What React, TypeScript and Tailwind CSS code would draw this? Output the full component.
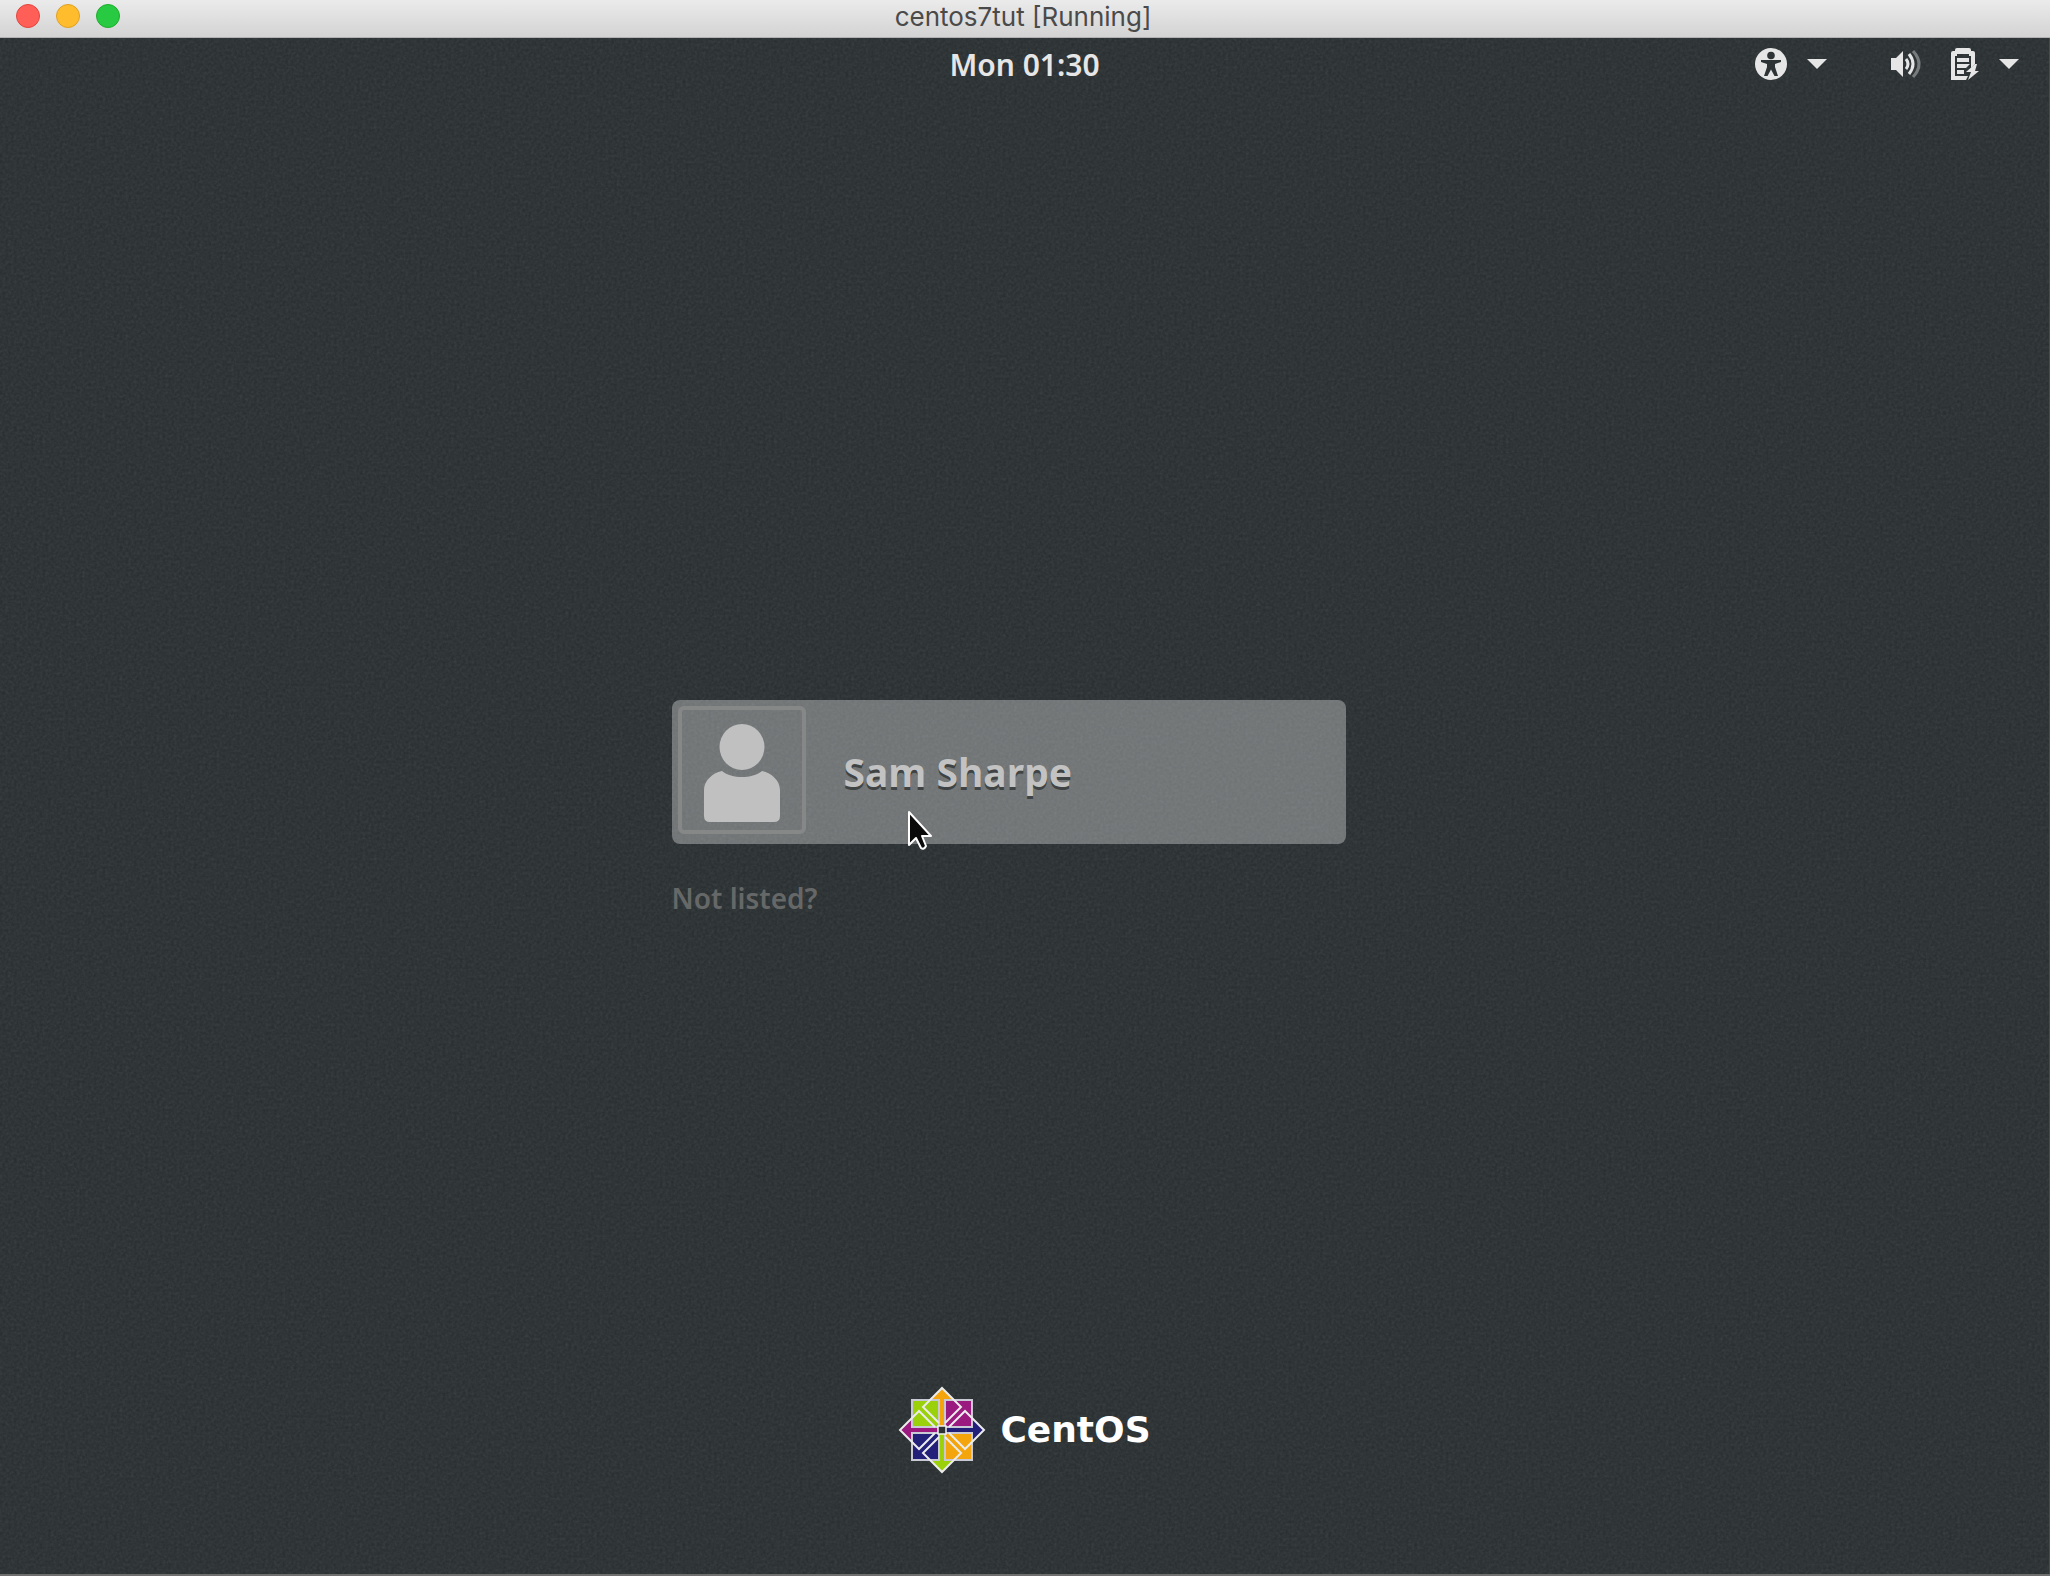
import type { ReactNode } from 'react'

const LIME = '#9bd10a'
const ORANGE = '#f5a50c'
const MAGENTA = '#9b1a7f'
const INDIGO = '#23207a'

export default function App() {
  return (
    <div className="flex min-h-screen flex-col border-b-2 border-[#6e6e6e] bg-[#272d2f]">
      <TitleBar title="centos7tut [Running]" />
      <div className="relative grid flex-1 grid-rows-[1fr_auto_1fr] border-r border-[#4a4a4a] font-['Noto_Sans',sans-serif]">
        <Grain />
        <TopBar />
        <UserList />
        <footer className="relative flex items-end justify-center gap-[14px] pb-[100px]">
          <CentosMark />
          <span className="flex h-[88px] items-center font-['DejaVu_Sans',sans-serif] text-[36px] font-bold text-white">
            CentOS
          </span>
        </footer>
      </div>
    </div>
  )
}

function TitleBar({ title }: { title: string }) {
  return (
    <header className="grid h-[38px] grid-cols-[1fr_auto_1fr] items-start border-b border-[#b1b1b1] bg-linear-to-b from-[#ebebeb] to-[#d3d3d3] pr-5 pl-4">
      <div className="flex gap-4 pt-1">
        <button aria-label="Close" className="size-6 rounded-full border border-[#e2443f] bg-[#ff5f57]" />
        <button aria-label="Minimize" className="size-6 rounded-full border border-[#dfa023] bg-[#ffbd2e]" />
        <button aria-label="Zoom" className="size-6 rounded-full border border-[#1dad2b] bg-[#28ca42]" />
      </div>
      <h1 className="font-['Inter',sans-serif] text-[26px] leading-[34px] text-[#4a4a4a]">{title}</h1>
    </header>
  )
}

function TopBar() {
  return (
    <nav className="relative grid h-[52px] grid-cols-[1fr_auto_1fr] items-center px-[30px] text-[#e6e6e6]">
      <button className="col-start-2 pt-[2px] text-[30px] leading-8 font-semibold">Mon 01:30</button>
      <div className="flex items-center justify-end gap-16">
        <button aria-label="Accessibility" className="flex items-center gap-5">
          <AccessIcon />
          <Caret />
        </button>
        <button aria-label="System" className="flex items-center gap-5">
          <VolumeIcon />
          <BatteryIcon />
          <Caret />
        </button>
      </div>
    </nav>
  )
}

function UserList() {
  return (
    <main className="relative mx-auto flex w-full max-w-[706px] flex-col items-start gap-10 pr-8">
      <button className="relative flex h-36 w-full items-start gap-[38px] rounded-lg bg-white/33 p-[6px] text-left">
        <span className="flex size-32 items-end justify-center rounded-md border-4 border-[#868888] pb-2">
          <svg width="76" height="98" viewBox="0 0 76 98" fill="#c0c0c0">
            <ellipse cx="38" cy="23" rx="22.5" ry="23" />
            <path d="M18 47 C28 55 48 55 58 47 C68 49 76 57 76 66 V92 Q76 98 70 98 H6 Q0 98 0 92 V66 C0 57 8 49 18 47 Z" />
          </svg>
        </span>
        <span className="self-center text-[39px] leading-[48px] font-bold text-[#c2c2c2] [text-shadow:0_3px_0_#3f4344]">
          Sam Sharpe
        </span>
        <Pointer />
      </button>
      <button className="text-[28px] leading-7 font-semibold text-[#666868]">Not listed?</button>
    </main>
  )
}

// noise texture of the desktop background
function Grain() {
  return (
    <svg className="pointer-events-none absolute inset-0 size-full opacity-12" aria-hidden="true">
      <filter id="grain">
        <feTurbulence type="fractalNoise" baseFrequency="0.35" numOctaves="2" stitchTiles="stitch" />
        <feColorMatrix type="saturate" values="0" />
      </filter>
      <rect width="100%" height="100%" filter="url(#grain)" />
    </svg>
  )
}

function Caret() {
  return (
    <svg width="20" height="10" viewBox="0 0 20 10" fill="currentColor">
      <path d="M0 0H20L10 10Z" />
    </svg>
  )
}

function AccessIcon() {
  return (
    <svg width="32" height="32" viewBox="0 0 32 32">
      <circle cx="16" cy="16" r="16" fill="currentColor" />
      <g fill="#2e3436">
        <circle cx="16" cy="7.5" r="3.8" />
        <path d="M6 12H26V14L20 16V19L23 28H19.5L16 21.5L12.5 28H9L12 19V16L6 14Z" />
      </g>
    </svg>
  )
}

function VolumeIcon() {
  return (
    <svg width="30" height="28" viewBox="0 0 30 28" fill="none" stroke="currentColor">
      <path d="M0 8H5L12 1V27L5 20H0Z" fill="currentColor" stroke="none" />
      <path d="M15 9Q19 14 15 19" strokeWidth="3" />
      <path d="M18 4Q26 14 18 24" strokeWidth="3" />
      <path d="M22 1Q34 14 22 27" strokeWidth="3" opacity="0.4" />
    </svg>
  )
}

function BatteryIcon() {
  return (
    <svg className="ml-[10px]" width="28" height="32" viewBox="0 0 28 32">
      <path
        fill="currentColor"
        fillRule="evenodd"
        d="M4 3V2Q4 0 6 0H18Q20 0 20 2V3H22Q24 3 24 5V16L20 20V8H18V6H6V8H4V28H17L15 32H0V5Q0 3 2 3Z"
      />
      <path d="M6 10H18V14H6ZM6 16H19L15 20H6ZM6 22H13V26H6Z" fill="currentColor" />
      <path d="M24 16L15 24H20L17 32L28 23H24L26 16Z" fill="currentColor" />
    </svg>
  )
}

function Pointer() {
  return (
    <svg className="absolute top-[109px] left-[235px]" width="26" height="42" viewBox="0 0 26 42">
      <path
        d="M2 3V36L9 29L14 39Q17 41 19 37L15 27H24Z"
        fill="#0a0a0a"
        stroke="#fff"
        strokeWidth="2"
        strokeLinejoin="round"
      />
    </svg>
  )
}

function Quadrant({ turn, square, arrow }: { turn: number; square: string; arrow: string }): ReactNode {
  return (
    <g transform={`rotate(${turn} 44 44)`}>
      <path d="M14 14H41V41H14Z" fill={square} stroke="#c9c9d6" strokeWidth="2" />
      <path d="M44 2L55 13H46V40H42V13H33Z" fill={arrow} />
    </g>
  )
}

function CentosMark() {
  return (
    <svg width="88" height="88" viewBox="0 0 88 88">
      <Quadrant turn={0} square={LIME} arrow={ORANGE} />
      <Quadrant turn={90} square={MAGENTA} arrow={INDIGO} />
      <Quadrant turn={180} square={ORANGE} arrow={LIME} />
      <Quadrant turn={270} square={INDIGO} arrow={MAGENTA} />
      <g fill="none" stroke="#ececec" strokeWidth="2">
        {[0, 90, 180, 270].map((turn) => (
          <path key={turn} d="M41 37L25 21L44 2L63 21L47 37" transform={`rotate(${turn} 44 44)`} />
        ))}
      </g>
      <rect x="40" y="40" width="8" height="8" fill="#2e3436" stroke="#f2f2f2" strokeWidth="1.5" />
    </svg>
  )
}
